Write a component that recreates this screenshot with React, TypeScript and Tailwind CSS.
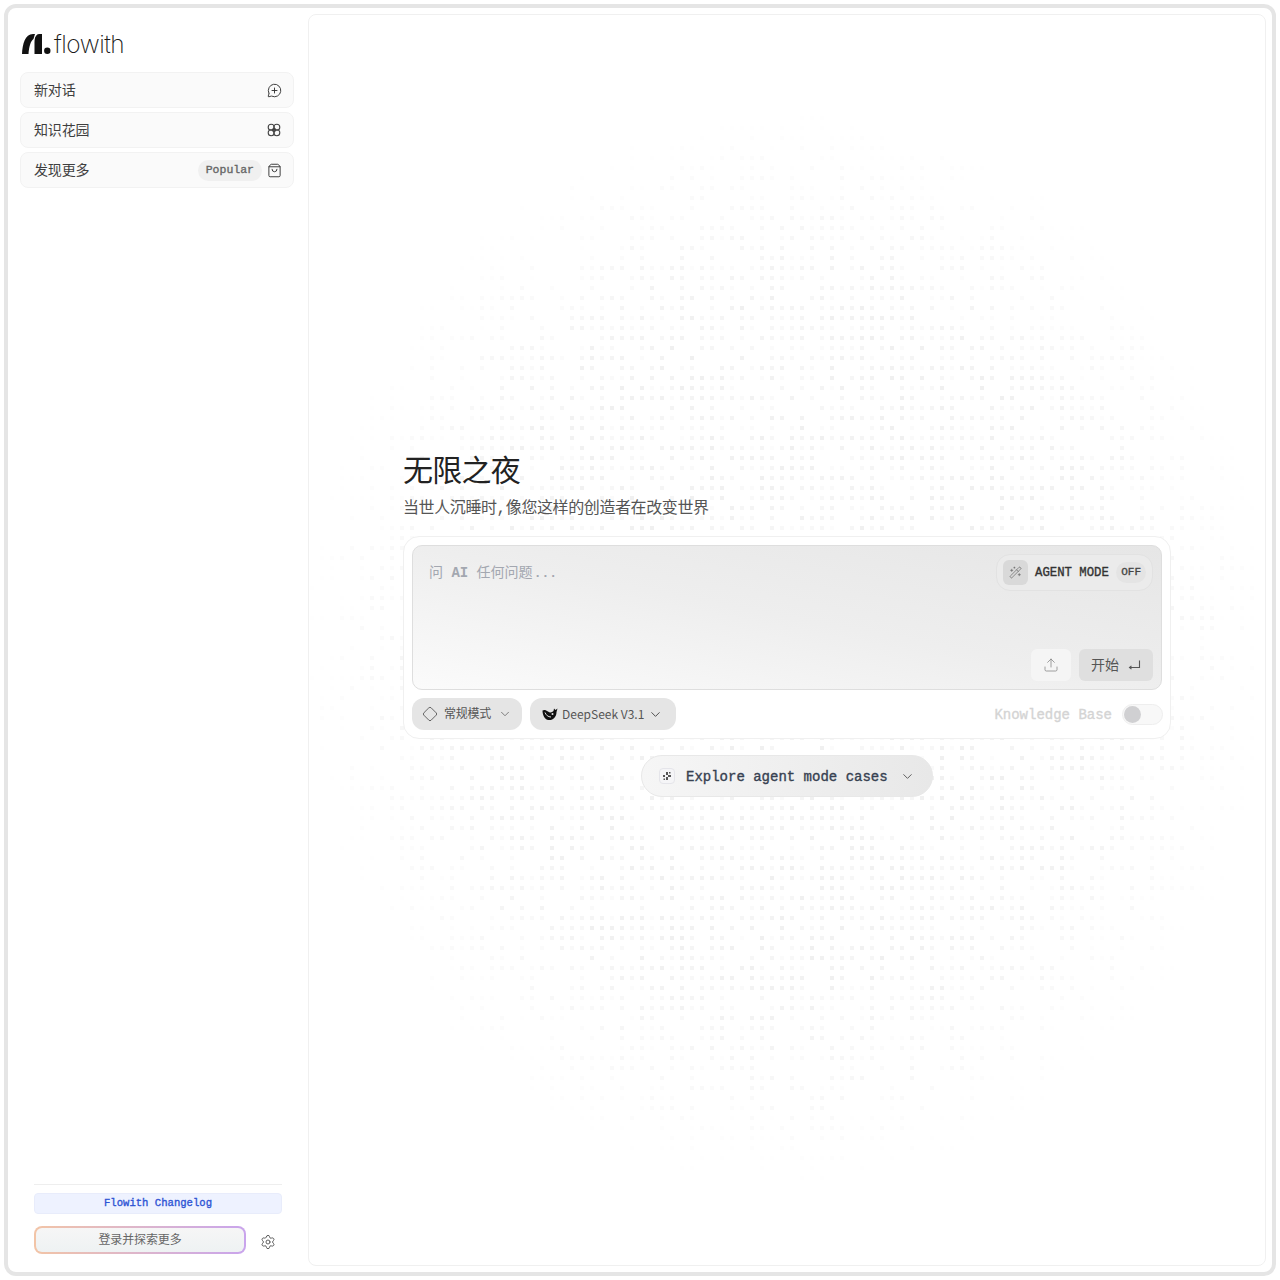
import React, { useMemo } from 'react';
import { ChevronDown, Diamond, MessageCirclePlus, Settings, ShoppingBag, Upload, WandSparkles } from 'lucide-react';

const cjk = "font-['Inter','Noto_Sans_CJK_SC',sans-serif]";
const mono = "font-['Liberation_Mono','Noto_Sans_CJK_SC',monospace]";
const semi = '[-webkit-text-stroke:0.35px_currentColor]';

const FlowerIcon = () => (
  <svg width="16" height="16" viewBox="0 0 16 16" fill="none" stroke="#444" strokeWidth="1.1">
    <circle cx="5.2" cy="5.2" r="3" />
    <circle cx="10.8" cy="5.2" r="3" />
    <circle cx="5.2" cy="10.8" r="3" />
    <circle cx="10.8" cy="10.8" r="3" />
    <circle cx="8" cy="8" r="1.6" />
  </svg>
);

const Logo = () => (
  <svg width="29" height="20" viewBox="0 0 29 20" fill="#111">
    <path d="M0 20 C0.5 10 3 0 11 0 L13 0 L11.5 5 C8.5 7 7 13 6.5 20 Z" />
    <path d="M12.5 20 L12.5 8 C12.5 3 14.5 0 17 0 L20 0 L20 20 Z" />
    <circle cx="25.3" cy="16.8" r="3.2" />
  </svg>
);

const Whale = () => (
  <svg width="16" height="13" viewBox="0 0 16 13" fill="#111">
    <path d="M0.5 2.5 C2 1.5 4 2 6 3.5 C8 5 10 4.5 11.5 3 L12 0.5 L13.5 2 L15.5 0.5 L14.5 4 C14.5 9 11 12.5 6.5 12 C2.5 11.5 0.5 7 0.5 2.5 Z" />
    <circle cx="10.5" cy="6" r="1" fill="#e5e5e5" />
    <path d="M3 4.5 C4 7 6 9 9 9" stroke="#e5e5e5" strokeWidth="1" fill="none" />
  </svg>
);

const EnterIcon = () => (
  <svg width="13" height="12" viewBox="0 0 13 12" fill="none" stroke="#555" strokeWidth="1.1">
    <path d="M11.5 1.5 V8.5 H1.5" />
    <path d="M3.5 6.8 L1.5 8.5 L3.5 10.2" />
  </svg>
);

// background dots, scattered on a 10px grid
const DotField = () => {
  const dots = useMemo(() => {
    const out: { x: number; y: number; o: number }[] = [];
    for (let row = 0; row < 125; row++) {
      for (let col = 0; col < 95; col++) {
        const x = col * 10 + 1;
        const y = row * 10 + 1;
        const dx = (x + 308 - 787) / 490;
        const dy = (y + 14 - 645) / 540;
        const d = Math.sqrt(dx * dx + dy * dy);
        if (d > 1) continue;
        const h = Math.abs(Math.sin(col * 12.9898 + row * 78.233) * 43758.5453) % 1;
        const h2 = Math.abs(Math.sin(col * 39.346 + row * 11.135) * 24634.6345) % 1;
        const strength = Math.min(1, (1 - d) * 2.8);
        if (h > 0.3 + strength * 0.4) continue;
        out.push({ x, y, o: (0.2 + h2 * 0.7) * strength });
      }
    }
    return out;
  }, []);
  return (
    <svg className="absolute inset-0 w-full h-full" fill="#eeeeee">
      {dots.map((d, i) => (
        <rect key={i} x={d.x} y={d.y} width="4" height="4" opacity={d.o} />
      ))}
    </svg>
  );
};

const NavItem = ({ label, children }: { label: string; children: React.ReactNode }) => (
  <div className="h-9 flex items-center justify-between pl-[13px] pr-[11px] rounded-lg bg-[#fafafa] border border-[#f2f2f2]">
    <span className="text-sm text-[#3f3f3f] tracking-[-0.01em]">{label}</span>
    <div className="flex items-center gap-[5px]">{children}</div>
  </div>
);

export default function App() {
  return (
    <div className={`h-[1280px] p-1 bg-white ${cjk}`}>
      <div className="h-full flex border-4 border-[#e5e5e5] rounded-xl bg-white overflow-hidden">
        <aside className="w-[300px] shrink-0 flex flex-col pl-3 pr-[14px]">
          <div className="h-16 flex items-end gap-[3px] pl-[2px] pb-3">
            <div className="mb-[6px]"><Logo /></div>
            <span className="text-[24.5px] leading-[32px] font-[250] text-[#1a1a1a] tracking-[-0.02em]">flowith</span>
          </div>
          <div className="flex flex-col gap-1">
            <NavItem label="新对话"><MessageCirclePlus size={15} strokeWidth={1.5} className="text-[#333]" /></NavItem>
            <NavItem label="知识花园"><FlowerIcon /></NavItem>
            <NavItem label="发现更多">
              <span className={`h-[21px] px-2 flex items-center rounded-full bg-[#f0f0f0] text-[11.5px] text-[#666] ${mono} ${semi}`}>Popular</span>
              <ShoppingBag size={15} strokeWidth={1.5} className="text-[#333]" />
            </NavItem>
          </div>
          <div className="mt-auto pl-[14px] pr-[12px] pb-[18px]">
            <div className="border-t border-[#eeeeee] pt-2">
              <div className={`h-[21px] flex items-center justify-center rounded bg-[#eef2ff] border border-[#e8ecfb] text-[10.6px] text-[#2f55d4] ${mono} ${semi}`}>Flowith Changelog</div>
            </div>
            <div className="mt-3 flex items-center gap-[14px]">
              <div className="w-[212px] h-7 rounded-lg p-[2px] bg-gradient-to-r from-[#f2c4a6] to-[#c9a4ec]">
                <div className="h-full rounded-md bg-gradient-to-b from-[#f6f6f6] to-[#eef2f3] flex items-center justify-center text-xs text-[#666] tracking-[-0.01em]">登录并探索更多</div>
              </div>
              <Settings size={16} strokeWidth={1.4} className="text-[#555] mt-1" />
            </div>
          </div>
        </aside>

        <main className="relative flex-1 my-[6px] mr-[6px] rounded-lg border border-[#f0f0f0] bg-white overflow-hidden flex justify-center">
          <DotField />
          <div className="relative w-[768px] mt-[433px]">
            <h1 className="text-[30px] leading-[44px] font-normal text-[#222] tracking-[-0.025em]">无限之夜</h1>
            <p className="mt-[3px] text-base leading-[24px] text-[#555] tracking-[-0.4px]">当世人沉睡时<span className={mono}>,</span>像您这样的创造者在改变世界</p>
            <div className="mt-[15px] h-[203px] rounded-2xl border border-[#f0f0f0] bg-white p-2">
              <div className="relative h-[145px] rounded-[10px] border border-[#dedede] bg-gradient-to-bl from-[#e6e6e6] via-[#eeeeee] to-[#fbfbfb]">
                <div className={`absolute left-4 top-[17px] text-sm text-[#a3a7b0] ${mono}`}>
                  问 <span className="font-bold">AI</span> 任何问题<span className="ml-[1px] text-[13px] font-bold">...</span>
                </div>
                <div className="absolute right-2 top-2 h-[37px] w-[157px] rounded-[14px] border border-[#e2e2e2] bg-[#ebebeb] flex items-center pl-[6px] pr-[6px]">
                  <div className="w-[25px] h-[25px] rounded-md bg-[#d9d9d9] flex items-center justify-center">
                    <WandSparkles size={13} strokeWidth={1.3} className="text-[#666]" />
                  </div>
                  <span className={`ml-[7px] mt-[1px] text-[12.3px] text-[#333] ${mono} ${semi}`}>AGENT MODE</span>
                  <span className={`ml-auto h-[21px] px-[5px] flex items-center rounded-full bg-[#e4e4e4] text-[11px] text-[#444] ${mono} ${semi}`}>OFF</span>
                </div>
                <div className="absolute right-2 bottom-2 flex gap-2">
                  <div className="w-10 h-8 rounded-md bg-[#f5f5f5] flex items-center justify-center">
                    <Upload size={16} strokeWidth={1.2} className="text-[#888]" />
                  </div>
                  <div className="w-[74px] h-8 rounded-md bg-[#dfdfdf] flex items-center pl-3 gap-[9px]">
                    <span className="text-sm text-[#555]">开始</span>
                    <EnterIcon />
                  </div>
                </div>
              </div>
              <div className="mt-2 flex items-center">
                <div className="h-8 w-[110px] rounded-xl bg-[#e5e5e5] flex items-center pl-[10px] gap-[6px]">
                  <Diamond size={16} strokeWidth={1.2} className="text-[#444]" />
                  <span className="text-xs text-[#555] tracking-[-0.02em]">常规模式</span>
                  <ChevronDown size={14} strokeWidth={1.4} className="ml-[1px] text-[#666]" />
                </div>
                <div className="ml-2 h-8 w-[146px] rounded-xl bg-[#e5e5e5] flex items-center pl-3 gap-1">
                  <Whale />
                  <span className="-mt-px text-xs leading-4 text-[#555] font-['Noto_Sans_CJK_SC',sans-serif]">DeepSeek V3.1</span>
                  <ChevronDown size={15} strokeWidth={1.5} className="text-[#444]" />
                </div>
                <span className={`ml-auto mt-[1px] text-sm text-[#d4d4d4] ${mono} ${semi}`}>Knowledge Base</span>
                <div className="ml-[10px] -mr-[1px] w-[41px] h-[21px] rounded-full border border-[#eeeeee] bg-[#f8f8f8] flex items-center pl-[1px]">
                  <div className="w-[17px] h-[17px] rounded-full bg-[#d0d0d2]" />
                </div>
              </div>
            </div>
            <div className="mt-4 flex justify-center">
              <div className="w-[292px] h-[42px] rounded-full border border-[#e8e8e8] bg-gradient-to-r from-[#f6f6f6] to-[#e8e8e8] flex items-center pl-[17px]">
                <div className="w-4 h-4 rounded-sm border border-[#e5e5ea] bg-[#f5f5f7] flex items-center justify-center">
                  <svg width="10" height="10" viewBox="0 0 10 10" fill="#555">
                    <rect x="4" y="1" width="2" height="3" /><rect x="6" y="4" width="3" height="2" /><rect x="4" y="6" width="2" height="3" /><rect x="1" y="4" width="2" height="2" /><rect x="7" y="1" width="1.5" height="1.5" /><rect x="1.5" y="7.5" width="1.5" height="1.5" />
                  </svg>
                </div>
                <span className={`ml-[11px] mt-[1px] text-sm text-[#374151] ${mono} ${semi}`}>Explore agent mode cases</span>
                <ChevronDown size={15} strokeWidth={1.5} className="ml-[12px] text-[#555]" />
              </div>
            </div>
          </div>
        </main>
      </div>
    </div>
  );
}
